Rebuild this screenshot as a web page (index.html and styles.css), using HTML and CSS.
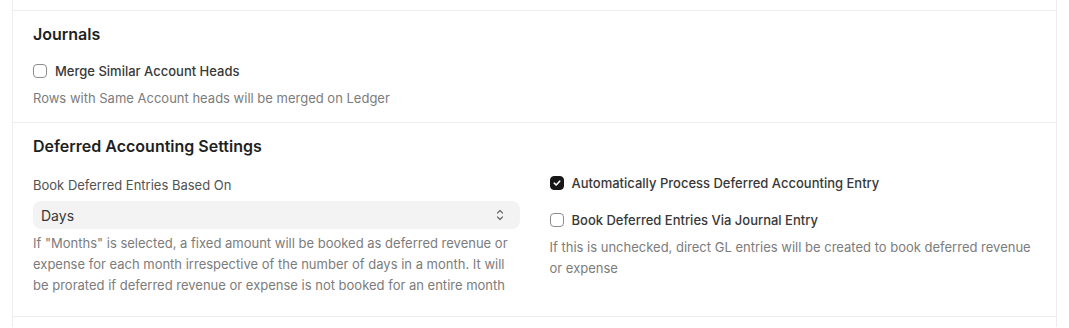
FILE: index.html
```html
<!DOCTYPE html>
<html>

<head>
    <title>Accounts Settings</title>
    <link rel="stylesheet" href="styles.css">
</head>

<body>
    <div class="form-page">
        <div class="form-section section-stub"></div>

        <div class="form-section">
            <h4 class="section-head">Journals</h4>
            <div class="section-body single">
                <div class="form-column">
                    <label class="check-field">
                        <span class="checkbox"></span>
                        <span class="check-label">Merge Similar Account Heads</span>
                    </label>
                    <p class="help">Rows with Same Account heads will be merged on Ledger</p>
                </div>
            </div>
        </div>

        <div class="form-section deferred">
            <h4 class="section-head">Deferred Accounting Settings</h4>
            <div class="section-body">
                <div class="form-column">
                    <div class="control-label">Book Deferred Entries Based On</div>
                    <div class="select-box">
                        <span>Days</span>
                        <svg class="select-icon" width="8" height="12" viewBox="0 0 8 12">
                            <path d="M1.5 4 L4 1.5 L6.5 4" fill="none" stroke="#6b6b6b" stroke-width="1.2" stroke-linecap="round" stroke-linejoin="round"/>
                            <path d="M1.5 8 L4 10.5 L6.5 8" fill="none" stroke="#6b6b6b" stroke-width="1.2" stroke-linecap="round" stroke-linejoin="round"/>
                        </svg>
                    </div>
                    <p class="help tight">If "Months" is selected, a fixed amount will be booked as deferred revenue or expense for each month irrespective of the number of days in a month. It will be prorated if deferred revenue or expense is not booked for an entire month</p>
                </div>
                <div class="form-column">
                    <label class="check-field first">
                        <span class="checkbox checked">
                            <svg width="10" height="10" viewBox="0 0 10 10">
                                <path d="M2.3 5.2 L4.2 7 L7.7 3.2" fill="none" stroke="#fff" stroke-width="1.6" stroke-linecap="round" stroke-linejoin="round"/>
                            </svg>
                        </span>
                        <span class="check-label">Automatically Process Deferred Accounting Entry</span>
                    </label>
                    <label class="check-field second">
                        <span class="checkbox"></span>
                        <span class="check-label">Book Deferred Entries Via Journal Entry</span>
                    </label>
                    <p class="help">If this is unchecked, direct GL entries will be created to book deferred revenue or expense</p>
                </div>
            </div>
        </div>

        <div class="form-section section-stub"></div>
    </div>
</body>
</html>
```

FILE: styles.css
```css
/* Settings form sections */
body {
    margin: 0;
    background-color: #ffffff;
    font-family: 'Inter', 'Noto Sans', sans-serif;
    color: #383838;
}

.form-page {
    margin: 0 12px 0 12px;
    border-left: 1px solid #ededed;
    border-right: 1px solid #ededed;
}

.form-section {
    border-top: 1px solid #ededed;
    padding: 13px 20px 13px 20px;
}

.form-section:first-child {
    border-top: none;
}

.section-stub {
    height: 10px;
    padding: 0;
}

.deferred {
    padding-bottom: 20px;
}

.section-head {
    margin: 0;
    font-size: 16px;
    line-height: 20px;
    font-weight: 600;
    color: #1f1f1f;
}

.section-body {
    display: grid;
    grid-template-columns: 1fr 1fr;
    column-gap: 30px;
}

.section-body.single {
    grid-template-columns: 1fr;
}

.form-column {
    display: flex;
    flex-direction: column;
}

.check-field {
    display: flex;
    align-items: center;
    gap: 8px;
    margin-top: 17px;
    font-size: 13px;
    line-height: 20px;
    font-weight: 500;
    color: #383838;
    cursor: pointer;
}

.check-field.second {
    margin-top: 17px;
}

.checkbox {
    width: 14px;
    height: 14px;
    box-sizing: border-box;
    border: 1px solid #8d8d8d;
    border-radius: 4px;
    background-color: #ffffff;
    display: flex;
    justify-content: center;
    align-items: center;
    flex-shrink: 0;
}

.checkbox.checked {
    background-color: #171717;
    border-color: #171717;
}

.help {
    margin: 7px 0 0 0;
    font-size: 13px;
    line-height: 21px;
    color: #7c7c7c;
}

.help.tight {
    margin-top: 4px;
}

.control-label {
    margin-top: 19px;
    font-size: 13px;
    line-height: 20px;
    color: #525252;
}

.select-box {
    margin-top: 6px;
    height: 28px;
    box-sizing: border-box;
    padding: 0 10px 0 8px;
    display: flex;
    align-items: center;
    justify-content: space-between;
    background-color: #f3f3f3;
    border-radius: 8px;
    font-size: 14px;
    color: #383838;
}

.select-icon {
    margin-right: 6px;
}
```
